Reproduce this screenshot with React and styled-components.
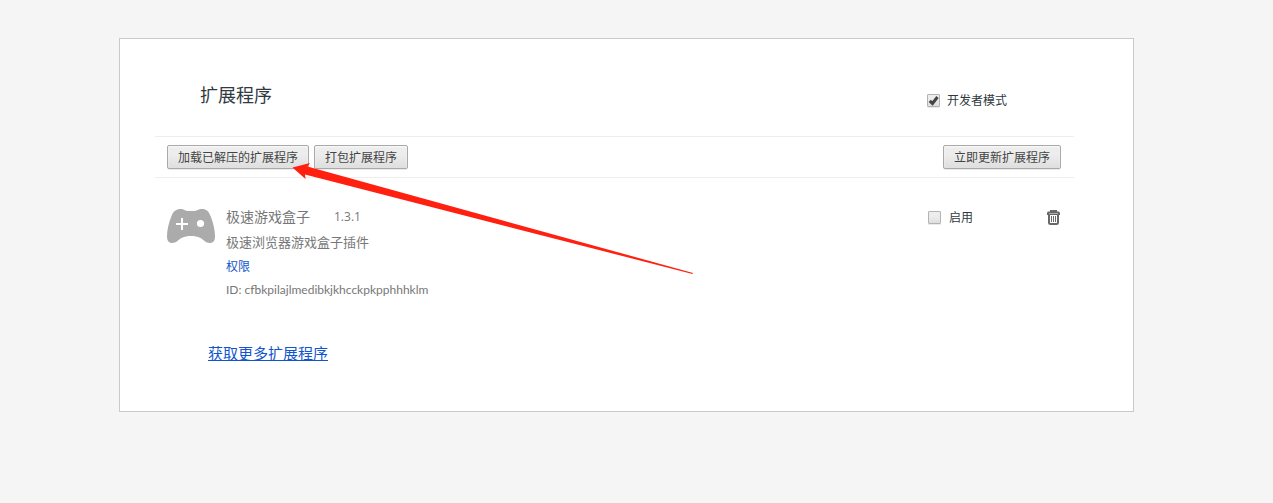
import React, { useState } from "react";
import styled, { createGlobalStyle } from "styled-components";

const GlobalStyle = createGlobalStyle`
  *, *::before, *::after { box-sizing: border-box; }
  body {
    margin: 0;
    background: #f5f5f5;
    color: #303942;
    font: 12px/24px "Open Sans", "Noto Sans CJK SC", sans-serif;
  }
`;

const Page = styled.div`
  padding: 38px 139px 38px 119px;
`;

const Panel = styled.main`
  position: relative;
  padding: 44px 59px 46px 35px;
  background: #fff;
  border: 1px solid #cacaca;
`;

const Header = styled.header`
  display: flex;
  justify-content: space-between;
  padding: 0 67px 19px 45px;
`;

const Title = styled.h1`
  margin: 0;
  font-size: 18px;
  font-weight: 400;
  line-height: 24px;
`;

const CheckLabel = styled.label`
  display: flex;
  align-items: center;
  gap: ${(p) => p.$gap}px;
  height: ${(p) => p.$height}px;
  font-family: "Noto Sans CJK SC", sans-serif;
`;

const CheckBox = styled.span`
  display: grid;
  width: 13px;
  height: 13px;

  > * {
    grid-area: 1 / 1;
  }

  input {
    appearance: none;
    width: 13px;
    height: 13px;
    margin: 0;
    border: 1px solid #b3b3b3;
    border-radius: 1px;
    background: linear-gradient(#ededed 38%, #dedede);
    box-shadow: 0 1px 0 rgba(0, 0, 0, 0.08);
  }

  svg {
    pointer-events: none;
    visibility: hidden;
    z-index: 1;
  }

  input:checked + svg {
    visibility: visible;
  }
`;

const Toolbar = styled.div`
  display: flex;
  gap: 5px;
  padding: 8px 13px 8px 12px;
  border-top: 1px solid #eee;
  border-bottom: 1px solid #eee;
`;

const Button = styled.button`
  height: 24px;
  margin: 0;
  margin-left: ${(p) => (p.$end ? "auto" : "0")};
  padding: 0 10px;
  border: 1px solid #a9a9a9;
  border-radius: 2px;
  background: linear-gradient(#ededed 38%, #dedede);
  box-shadow: 0 1px 0 rgba(0, 0, 0, 0.08), inset 0 1px 2px rgba(255, 255, 255, 0.75);
  color: #444;
  font: 12px/22px "Noto Sans CJK SC", sans-serif;
  white-space: nowrap;
`;

const Item = styled.article`
  display: flex;
  align-items: flex-start;
  padding: 27px 14px 0 12px;
`;

const Details = styled.div`
  flex: 1;
  min-width: 0;
  margin-left: 11px;
  color: #777;
`;

const NameRow = styled.div`
  display: flex;
  gap: 24px;
`;

const Name = styled.h2`
  margin: 0;
  font-size: 14px;
  font-weight: 400;
  line-height: 24px;
`;

const Text = styled.p`
  margin: 0;
  font-size: ${(p) => p.$size}px;
  line-height: ${(p) => p.$line || 24}px;
`;

const IdText = styled(Text)`
  font-family: Lato, "Noto Sans CJK SC", sans-serif;
`;

const PlainLink = styled.a`
  color: #15c;
  text-decoration: none;
`;

const TrashButton = styled.button`
  display: flex;
  align-items: center;
  height: 24px;
  margin: 0 0 0 74px;
  padding: 0;
  border: 0;
  background: none;
`;

const Footer = styled.footer`
  padding: 40px 0 0 53px;
  font-size: 15px;

  a {
    color: #15c;
    text-underline-offset: 1px;
  }
`;

const Pointer = styled.svg`
  position: absolute;
  top: 122px;
  left: 170px;
  pointer-events: none;
`;

function Check({ label, gap, height, defaultChecked }) {
  const [on, setOn] = useState(defaultChecked);
  return (
    <CheckLabel $gap={gap} $height={height}>
      <CheckBox>
        <input type="checkbox" checked={on} onChange={(e) => setOn(e.target.checked)} />
        <svg width="13" height="13" viewBox="0 0 13 13" aria-hidden="true">
          <path d="M2.700 6.800l2.800 2.700L10.500 3" fill="none" stroke="#444" strokeWidth="3" />
        </svg>
      </CheckBox>
      {label}
    </CheckLabel>
  );
}

function Gamepad() {
  return (
    <svg width="48" height="48" viewBox="0 0 48 48" aria-hidden="true">
      <path
        d="M14 4C17 4 18 6 21 6h6c3 0 4-2 8-2 4.500 0 6.500 2 8.500 7C46 17 48 25 48 31c0 5-2 7-5 7-4.500 0-6-3-10-5.200C30.500 31.500 27.500 31 24 31s-6.500.5-9 1.800C11 35 9.500 38 5 38c-3 0-5-2-5-7C0 25 2 17 4.500 11 6.500 6 9 4 14 4z"
        fill="#ababab"
      />
      <path d="M15 13v12M9 19h12" stroke="#fff" strokeWidth="2" />
      <circle cx="33.500" cy="18.500" r="3.600" fill="#fff" />
    </svg>
  );
}

function Trash() {
  return (
    <svg width="13" height="15" viewBox="0 0 13 15" aria-hidden="true">
      <path d="M4 2V1h5v1" fill="none" stroke="#686868" strokeWidth="2" />
      <path d="M1 1.500h11l1 1V5H0V2.500z" fill="#686868" />
      <path d="M2 5v7.500q0 1.500 1.500 1.500h6q1.500 0 1.500-1.500V5" fill="none" stroke="#686868" strokeWidth="2" />
      <path d="M4.500 6v6M6.500 6v6M8.500 6v6" stroke="#686868" />
      <path d="M2 3.500h9" stroke="#aaa" />
    </svg>
  );
}

export default function App() {
  return (
    <Page>
      <GlobalStyle />
      <Panel>
        <Header>
          <Title>扩展程序</Title>
          <Check label="开发者模式" gap={7} height={34} defaultChecked />
        </Header>
        <Toolbar>
          <Button type="button">加载已解压的扩展程序</Button>
          <Button type="button">打包扩展程序</Button>
          <Button type="button" $end>立即更新扩展程序</Button>
        </Toolbar>
        <Item>
          <Gamepad />
          <Details>
            <NameRow>
              <Name>极速游戏盒子</Name>
              <Text as="span" $size={12}>1.3.1</Text>
            </NameRow>
            <Text $size={13} $line={26}>极速浏览器游戏盒子插件</Text>
            <Text $size={12}>
              <PlainLink href="#permissions">权限</PlainLink>
            </Text>
            <IdText $size={12} $line={22}>ID: cfbkpilajlmedibkjkhcckpkpphhhklm</IdText>
          </Details>
          <Check label="启用" gap={8} height={24} defaultChecked={false} />
          <TrashButton type="button" aria-label="删除">
            <Trash />
          </TrashButton>
        </Item>
        <Footer>
          <a href="#more">获取更多扩展程序</a>
        </Footer>
        <Pointer width="404" height="114" viewBox="0 0 404 114" aria-hidden="true">
          <path d="M2.500 6.500L20 2l-2.500 3.500L403 112l-.5 1L15 13.500l.5 4.500z" fill="#ff2010" />
        </Pointer>
      </Panel>
    </Page>
  );
}
